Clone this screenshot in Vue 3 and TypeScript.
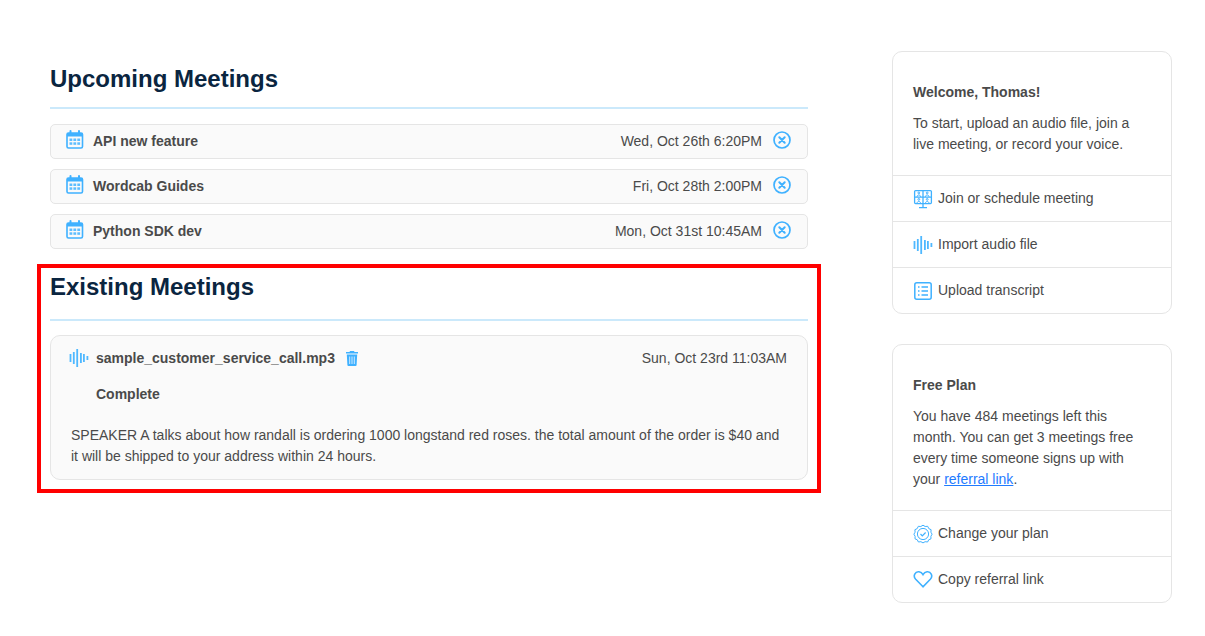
<script setup lang="ts">
interface Upcoming { title: string; when: string }
const upcoming: Upcoming[] = [
  { title: 'API new feature', when: 'Wed, Oct 26th 6:20PM' },
  { title: 'Wordcab Guides', when: 'Fri, Oct 28th 2:00PM' },
  { title: 'Python SDK dev', when: 'Mon, Oct 31st 10:45AM' },
]
const waveBars: [number, number][] = [[0.6, 6], [3.900, 4], [7.300, 1], [11, 5], [14, 6], [17.500, 8]]
</script>

<template>
  <div class="page">
    <main class="main">
      <section class="upcoming">
        <h2 class="heading">Upcoming Meetings</h2>
        <div class="rows">
          <div v-for="m in upcoming" :key="m.title" class="row">
            <svg class="cal" width="18" height="19" viewBox="0 0 18 19" fill="none">
              <rect x="1" y="3" width="15.500" height="15" rx="1.500" stroke="#3fb1ff" stroke-width="1.600" />
              <rect x="1" y="3" width="15.500" height="3.500" fill="#3fb1ff" />
              <rect x="3.500" y="0" width="2" height="4" rx="1" fill="#3fb1ff" />
              <rect x="12" y="0" width="2" height="4" rx="1" fill="#3fb1ff" />
              <g fill="#5cbdff">
                <rect x="3.500" y="8.500" width="2.800" height="2.500" /><rect x="7.400" y="8.500" width="2.800" height="2.500" /><rect x="11.300" y="8.500" width="2.800" height="2.500" />
                <rect x="3.500" y="12.300" width="2.800" height="2.500" /><rect x="7.400" y="12.300" width="2.800" height="2.500" /><rect x="11.300" y="12.300" width="2.800" height="2.500" />
              </g>
            </svg>
            <span class="row-title">{{ m.title }}</span>
            <span class="row-when">{{ m.when }}</span>
            <svg class="x" width="18" height="18" viewBox="0 0 18 18" fill="none" stroke="#3fb1ff">
              <circle cx="9" cy="9" r="8" stroke-width="1.700" />
              <path d="M6.300 6.300l5.400 5.400M11.700 6.300l-5.400 5.400" stroke-width="2" stroke-linecap="round" />
            </svg>
          </div>
        </div>
      </section>

      <section class="existing">
        <div class="highlight"></div>
        <h2 class="heading heading-existing">Existing Meetings</h2>
        <div class="card">
          <div class="card-top">
            <svg class="wave" width="20" height="20" viewBox="0 0 20 20" fill="#4fb8ff">
              <rect v-for="b in waveBars" :key="b[0]" :x="b[0]" :y="b[1]" width="1.800" :height="20 - 2 * b[1]" />
            </svg>
            <span class="file">sample_customer_service_call.mp3</span>
            <svg class="trash" width="12" height="15" viewBox="0 0 12 15" fill="#3fb1ff">
              <path d="M4 0h4l.5 1H12v1.500H0V1H3.500zM.8 3.500h10.400l-.6 10.500a1 1 0 0 1-1 1H2.400a1 1 0 0 1-1-1z" />
              <path d="M3.700 5.500v7.500M6 5.500v7.500M8.300 5.500v7.500" stroke="#cfeaff" stroke-width="1" />
            </svg>
            <span class="card-when">Sun, Oct 23rd 11:03AM</span>
          </div>
          <div class="status">Complete</div>
          <p class="summary">SPEAKER A talks about how randall is ordering 1000 longstand red roses. the total amount of the order is $40 and it will be shipped to your address within 24 hours.</p>
        </div>
      </section>
    </main>

    <aside class="side">
      <div class="panel">
        <div class="panel-body">
          <strong class="panel-title">Welcome, Thomas!</strong>
          <p class="panel-text">To start, upload an audio file, join a live meeting, or record your voice.</p>
        </div>
        <a class="action">
          <svg width="20" height="20" viewBox="0 0 20 20" fill="none" stroke="#3fb1ff" stroke-width="1.300">
            <rect x="1.600" y="1.600" width="16.800" height="13" rx="1" />
            <path d="M10 1.600v13M1.600 8.100h16.800M10 14.600v4M6 18.600h8" />
            <g stroke-width="1">
              <circle cx="5.800" cy="3.900" r=".9" /><circle cx="14.200" cy="3.900" r=".9" />
              <circle cx="5.800" cy="10.400" r=".9" /><circle cx="14.200" cy="10.400" r=".9" />
              <path d="M4 7.800c0-2.400 3.600-2.400 3.600 0M12.400 7.800c0-2.400 3.600-2.400 3.600 0M4 14.300c0-2.400 3.600-2.400 3.600 0M12.400 14.300c0-2.400 3.600-2.400 3.600 0" />
            </g>
          </svg>
          <span>Join or schedule meeting</span>
        </a>
        <a class="action">
          <svg width="20" height="20" viewBox="0 0 20 20" fill="#4fb8ff">
            <rect v-for="b in waveBars" :key="b[0]" :x="b[0]" :y="b[1]" width="1.800" :height="20 - 2 * b[1]" />
          </svg>
          <span>Import audio file</span>
        </a>
        <a class="action">
          <svg width="20" height="20" viewBox="0 0 20 20" fill="none" stroke="#3fb1ff" stroke-width="1.500">
            <rect x="1.800" y="1.800" width="16.400" height="16.400" rx="2" />
            <path d="M5 6h1.500M8.500 6H15M5 10h1.500M8.500 10H15M5 14h1.500M8.500 14H15" />
          </svg>
          <span>Upload transcript</span>
        </a>
      </div>

      <div class="panel">
        <div class="panel-body">
          <strong class="panel-title">Free Plan</strong>
          <p class="panel-text">You have 484 meetings left this month. You can get 3 meetings free every time someone signs up with your <a class="link">referral link</a>.</p>
        </div>
        <a class="action">
          <svg width="20" height="20" viewBox="0 0 20 20" fill="none" stroke="#3fb1ff" stroke-width="1">
            <path d="M10 1.200l2.200 1.300 2.500-.2 1.100 2.300 2.300 1.100-.2 2.500 1.200 2-1.200 2.100.1 2.500-2.300 1-1.100 2.200-2.500-.3-2.100 1.200-2.100-1.200-2.500.3-1.100-2.200-2.300-1 .1-2.500-1.200-2.100 1.200-2-.2-2.500 2.300-1.100 1.100-2.300 2.500.2z" />
            <circle cx="10" cy="10" r="5.600" />
            <path d="M7.500 10l1.800 1.800 3.300-3.300" stroke-width="1.200" />
          </svg>
          <span>Change your plan</span>
        </a>
        <a class="action">
          <svg class="heart" width="20" height="20" viewBox="0 0 20 20" fill="none" stroke="#3fb1ff" stroke-width="1.600">
            <path d="M10 17.800L2.700 10.300C-.5 6.700 2.300 2.300 6 2.800c1.800.3 3 1.200 4 2.900 1-1.700 2.200-2.600 4-2.900 3.700-.5 6.500 3.900 3.300 7.500z" />
          </svg>
          <span>Copy referral link</span>
        </a>
      </div>
    </aside>
  </div>
</template>

<style scoped>
.page {
  display: flex;
  justify-content: space-between;
  align-items: flex-start;
  width: 1205px;
  height: 636px;
  box-sizing: border-box;
  padding: 51px 33px 0 50px;
  font-family: "Liberation Sans", Arial, sans-serif;
  font-size: 14px;
  line-height: 21px;
  color: #4a4a4a;
  overflow: hidden;
}
.main {
  width: 758px;
}
.heading {
  margin: 0;
  padding: 14px 0 14px;
  border-bottom: 2px solid #cbe9fb;
  font-size: 24px;
  line-height: 28px;
  font-weight: 700;
  color: #0a2540;
}
.rows {
  display: flex;
  flex-direction: column;
  gap: 10px;
  margin-top: 15px;
}
.row {
  display: flex;
  align-items: center;
  height: 35px;
  box-sizing: border-box;
  padding: 0 16px 0 15px;
  background: #fafafa;
  border: 1px solid #e5e5e5;
  border-radius: 5px;
}
.cal {
  flex: none;
  margin-right: 9px;
  margin-top: -4px;
}
.x {
  flex: none;
  margin-top: -3px;
}
.row-title {
  font-weight: 700;
}
.row-when {
  margin-left: auto;
  margin-right: 11px;
}
.existing {
  position: relative;
  margin-top: 19px;
  padding-bottom: 13px;
}
.highlight {
  position: absolute;
  left: -13px;
  right: -13px;
  top: -4px;
  bottom: 0;
  border: 4px solid #ff0000;
  pointer-events: none;
}
.heading-existing {
  padding: 5px 0 18px;
}
.card {
  margin-top: 14px;
  height: 145px;
  box-sizing: border-box;
  padding: 12px 20px 0 20px;
  background: #fafafa;
  border: 1px solid #e5e5e5;
  border-radius: 10px;
}
.card-top {
  display: flex;
  align-items: center;
  height: 21px;
}
.wave {
  flex: none;
  margin-left: -2px;
  margin-right: 7px;
  margin-top: -1px;
}
.file {
  font-weight: 700;
}
.trash {
  flex: none;
  margin-left: 11px;
}
.card-when {
  margin-left: auto;
}
.status {
  margin-top: 15px;
  margin-left: 25px;
  font-weight: 700;
}
.summary {
  margin: 20px 0 0;
}
.side {
  display: flex;
  flex-direction: column;
  gap: 30px;
  width: 280px;
}
.panel {
  background: #fff;
  border: 1px solid #e5e5e5;
  border-radius: 10px;
}
.panel-body {
  padding: 30px 20px 20px;
}
.panel-title {
  display: block;
  font-weight: 700;
}
.panel-text {
  margin: 10px 0 0;
}
.link {
  color: #1f7bff;
  text-decoration: underline;
}
.action {
  display: flex;
  align-items: center;
  gap: 5px;
  height: 46px;
  box-sizing: border-box;
  padding: 0 20px;
  border-top: 1px solid #e5e5e5;
}
.action svg {
  flex: none;
}
.action .heart {
  margin-top: -2px;
}
</style>
